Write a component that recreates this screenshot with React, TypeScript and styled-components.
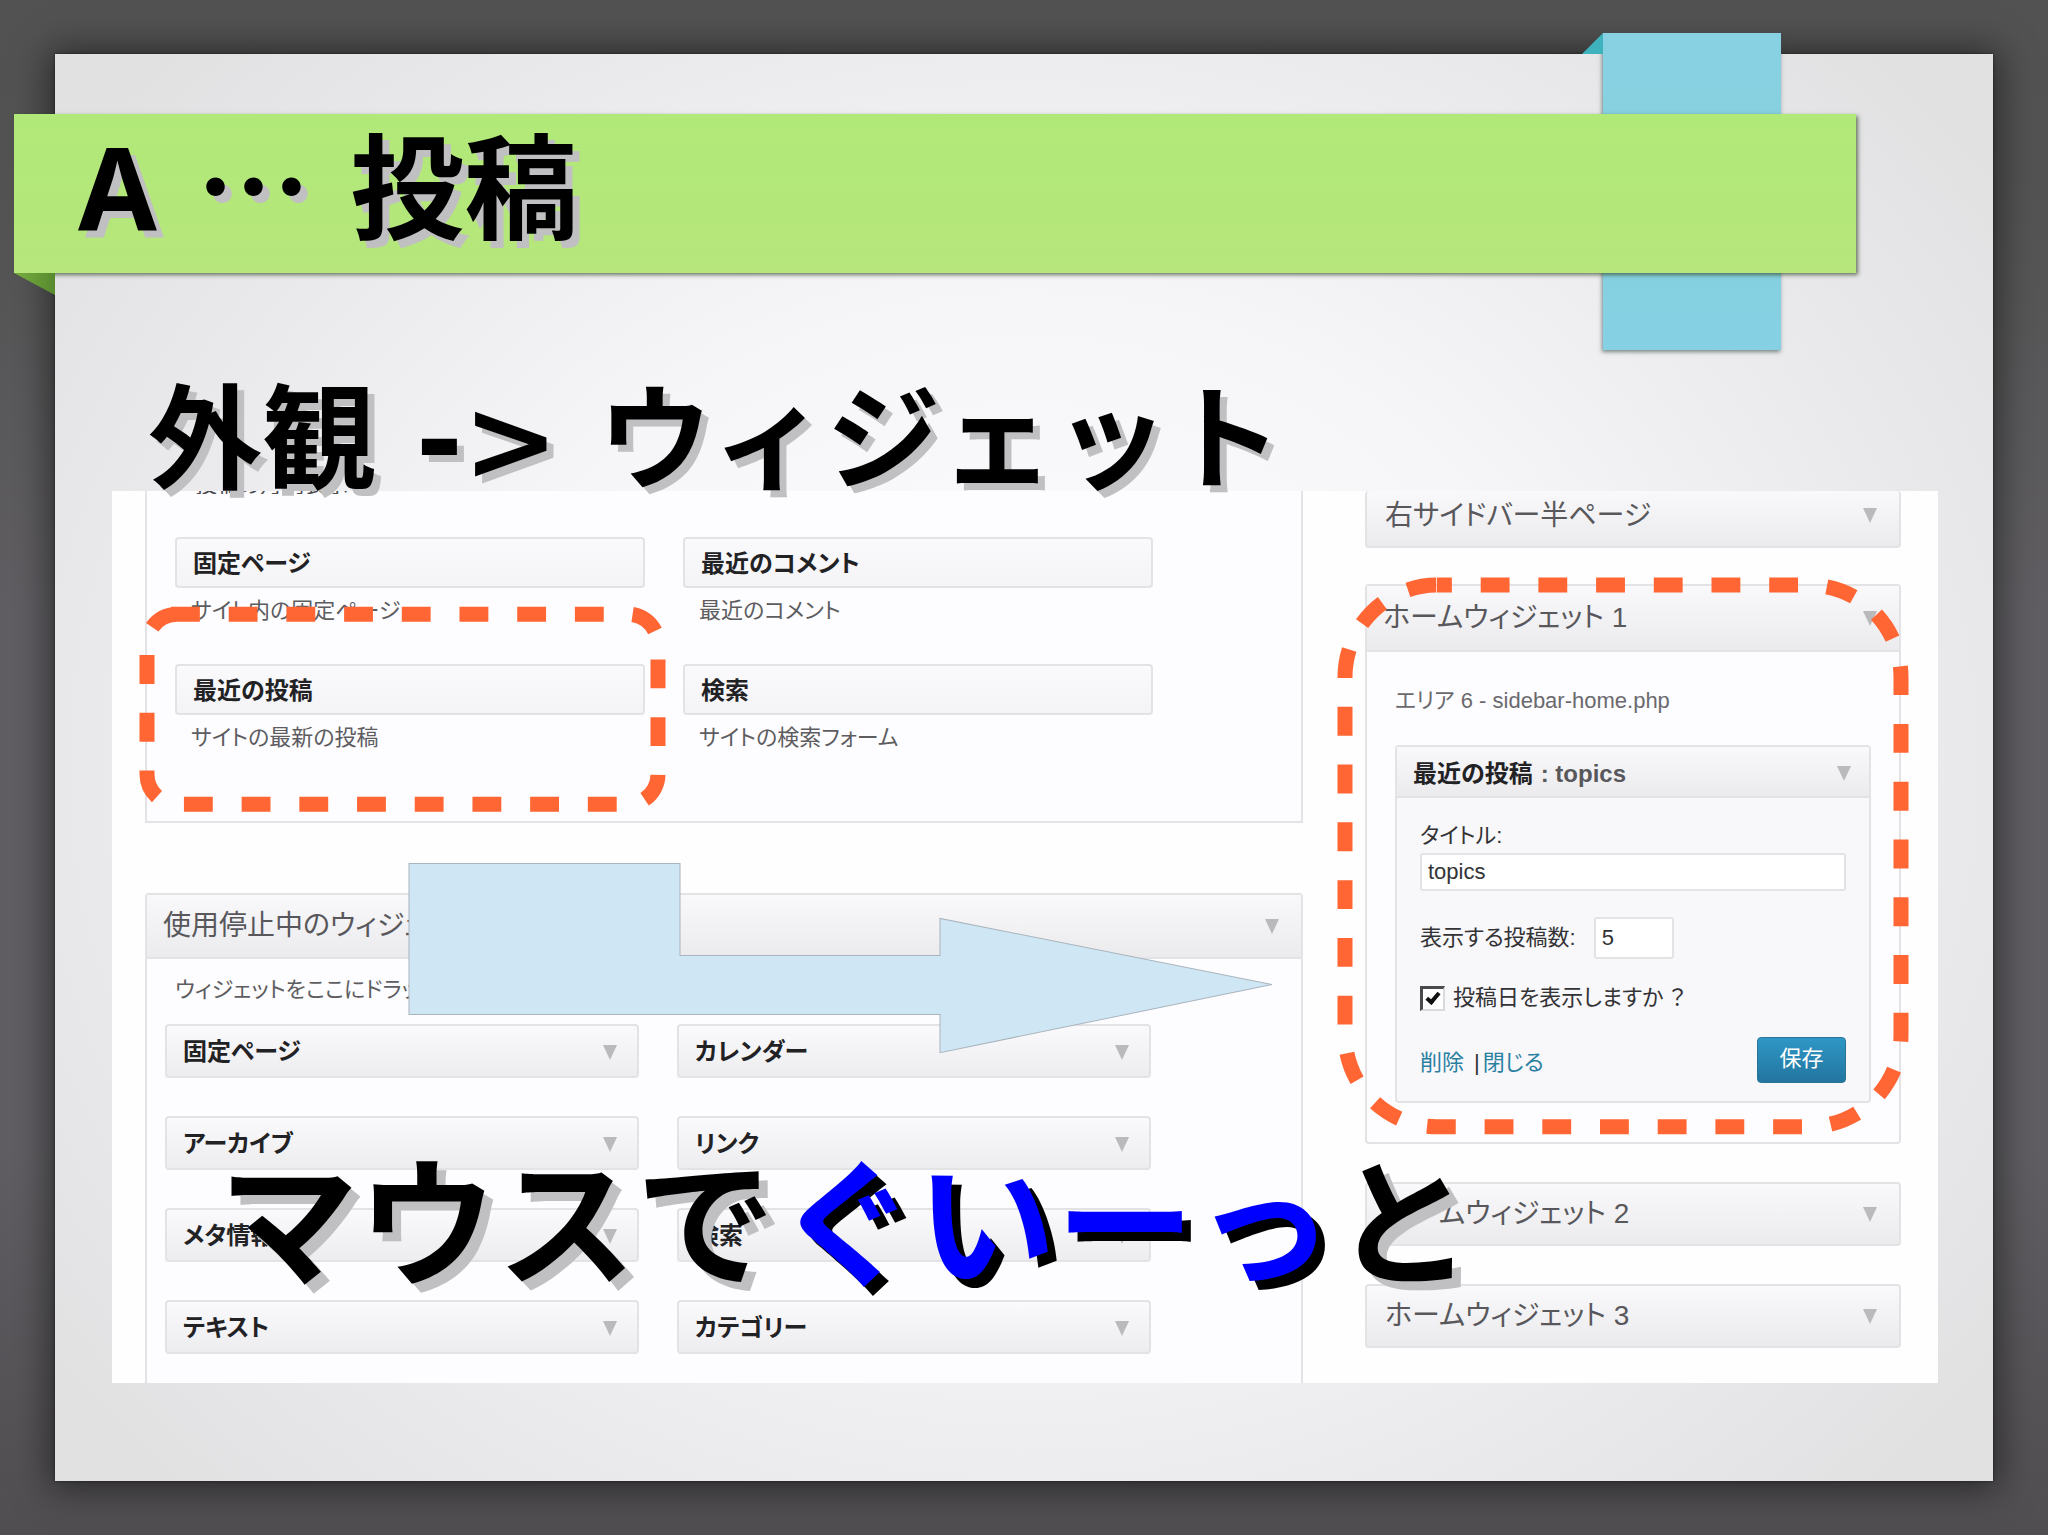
import React from "react";
import styled, { createGlobalStyle, css } from "styled-components";

const ORANGE = "#ff6633";
const LINE = "#e3e2e5";

const Global = createGlobalStyle`
  *, *::before, *::after { box-sizing: border-box; }
  html, body { margin: 0; padding: 0; }
  body {
    font-family: "Liberation Sans", "Noto Sans CJK JP", sans-serif;
    font-size: 22px;
    line-height: 24px;
    color: #4c4c50;
    background: #545355;
  }
  h1, h2, h3, p { margin: 0; font-weight: inherit; }
`;

const Slide = styled.div`
  display: flex;
  flex-direction: column;
  min-height: 100vh;
  padding: 54px 55px 54px;
  overflow: hidden;
  background: linear-gradient(180deg, #525252 0%, #535353 12%, #605e62 40%, #605e62 75%, #504e51 100%);
`;

const Sheet = styled.main`
  position: relative;
  flex: 1;
  padding: 60px 55px 98px 57px;
  background: radial-gradient(ellipse 62% 72% at 50% 50%, #fdfcff 0%, #f6f5f8 45%, #e9e8eb 78%, #e1e1e2 100%);
  box-shadow: 0 2px 34px 6px rgba(0, 0, 0, 0.5), 0 0 3px rgba(0, 0, 0, 0.5);
`;

const Tape = styled.div`
  position: absolute;
  top: -21px;
  right: 212px;
  width: 178px;
  height: 317px;
  background: linear-gradient(180deg, #88d1e3, #84d0dd 60%, #86d0e4);
  box-shadow: -1px 2px 4px rgba(60, 80, 80, 0.65);

  &::before {
    content: "";
    position: absolute;
    top: 0;
    left: -21px;
    width: 21px;
    height: 21px;
    background: #3fb3bd;
    clip-path: polygon(100% 0, 100% 100%, 0 100%);
  }
`;

const Banner = styled.header`
  position: relative;
  display: flex;
  align-items: center;
  height: 159px;
  margin: 0 82px 0 -98px;
  padding: 0 64px 26px;
  background: linear-gradient(180deg, #b1e978, #b6e67c);
  box-shadow: 2px 2px 4px rgba(50, 70, 40, 0.7);

  &::after {
    content: "";
    position: absolute;
    top: 100%;
    left: 0;
    width: 41px;
    height: 22px;
    background: linear-gradient(90deg, #76ad40, #588a2e);
    clip-path: polygon(0 0, 100% 0, 100% 100%);
  }
`;

const bigType = css`
  font-family: "Noto Sans CJK JP", sans-serif;
  font-weight: 700;
  color: #000;
  white-space: nowrap;
`;

const Title = styled.h1`
  ${bigType}
  font-size: 114px;
  line-height: 120px;
  text-shadow: 7px 7px 0 #c0bfc1;
`;

const Face = styled.span<{ $face: string }>`
  font-family: ${(p) => p.$face}, "Noto Sans CJK JP", sans-serif;
  line-height: 0;
  white-space: pre;
`;

const Subtitle = styled.h2`
  ${bigType}
  position: relative;
  z-index: 1;
  margin-top: 98px;
  padding-left: 36px;
  font-size: 114px;
  line-height: 120px;
  text-shadow: 7px 7px 0 #c0bfc1;
`;

const Stage = styled.section`
  position: relative;
`;

const Screen = styled.div`
  display: grid;
  grid-template-columns: 1158fr 536fr;
  column-gap: 62px;
  align-items: stretch;
  padding: 0 37px 0 33px;
  overflow: hidden;
  background: #fefefe;
  font-feature-settings: "palt";
`;

const Column = styled.div`
  display: flex;
  flex-direction: column;
  min-width: 0;
`;

const Available = styled.div`
  padding: 0 148px 71px 28px;
  border: 2px solid ${LINE};
  border-top: 0;
  background: #fdfcfe;
`;

const Clipped = styled.p`
  display: flex;
  align-items: flex-end;
  height: 3px;
  margin-bottom: 43px;
  padding-left: 20px;
  overflow: hidden;
  line-height: 18px;
`;

const Pairs = styled.div<{ $gap: number }>`
  display: grid;
  grid-template-columns: 1fr 1fr;
  column-gap: 38px;
  row-gap: ${(p) => p.$gap}px;
`;

const Bar = styled.h3<{ $tall?: boolean }>`
  display: flex;
  align-items: center;
  justify-content: space-between;
  height: ${(p) => (p.$tall ? 54 : 51)}px;
  padding: 2px 20px 0 16px;
  border: 2px solid ${LINE};
  border-radius: 4px;
  background: linear-gradient(180deg, #faf9fb, ${(p) => (p.$tall ? "#ededef" : "#f4f3f6")});
  font-size: 24px;
  font-weight: 700;
  color: #222225;
`;

const Note = styled.p`
  margin-top: 11px;
  padding-left: 16px;
  white-space: nowrap;
  color: #5d5d61;
`;

const Inactive = styled.div`
  flex: 1;
  margin-top: 70px;
  border: 2px solid ${LINE};
  border-bottom: 0;
  border-radius: 4px 4px 0 0;
  background: #fdfcfe;
`;

const InactiveBody = styled.div`
  padding: 19px 150px 29px 18px;
`;

const DropHint = styled.p`
  margin-bottom: 22px;
  padding-left: 10px;
  white-space: nowrap;
  color: #5d5d61;
`;

const AreaHead = styled.h3<{ $height: number; $framed?: boolean; $cut?: boolean }>`
  display: flex;
  align-items: center;
  justify-content: space-between;
  height: ${(p) => p.$height}px;
  padding: 0 22px ${(p) => (p.$cut ? 6 : 0)}px ${(p) => (p.$framed ? 16 : 18)}px;
  border: ${(p) => (p.$framed ? "0" : `2px solid ${LINE}`)};
  border-bottom: 2px solid ${LINE};
  ${(p) => p.$cut && "border-top: 0;"}
  border-radius: ${(p) => (p.$framed ? "0" : "4px")};
  background: linear-gradient(180deg, #f9f8fa, #ebeaec);
  font-size: 28px;
  line-height: 32px;
  white-space: nowrap;
  color: #58585c;
`;

const Arrow = styled.svg`
  flex: none;
  width: 14px;
  height: 15px;
  fill: #bab9bc;
`;

const Area = styled.div`
  margin-top: 36px;
  border: 2px solid ${LINE};
  border-radius: 4px;
  background: #fdfcfe;
`;

const AreaBody = styled.div`
  padding: 37px 28px 39px;
`;

const AreaNote = styled.p`
  margin-bottom: 32px;
  white-space: nowrap;
  color: #6a6a6e;
`;

const Widget = styled.form`
  border: 2px solid ${LINE};
  border-radius: 4px;
  background: #f8f7f9;
`;

const WidgetHead = styled.h3`
  display: flex;
  align-items: center;
  justify-content: space-between;
  height: 51px;
  padding: 4px 18px 0 16px;
  border-bottom: 2px solid ${LINE};
  background: linear-gradient(180deg, #f9f8fa, #ebeaec);
  font-size: 24px;
  font-weight: 700;
  color: #222225;
`;

const WidgetName = styled.span`
  margin-left: 8px;
  color: #58585c;
`;

const Fields = styled.div`
  display: flex;
  flex-direction: column;
  padding: 26px 23px 18px;
  color: #333336;
`;

const TextBox = styled.input<{ $width: string; $height: number }>`
  width: ${(p) => p.$width};
  height: ${(p) => p.$height}px;
  padding: 0 6px;
  border: 2px solid ${LINE};
  border-radius: 3px;
  background: #fff;
  font: inherit;
  color: #333336;
`;

const TitleLabel = styled.label`
  margin-bottom: 5px;
`;

const CountRow = styled.div`
  display: flex;
  align-items: center;
  gap: 18px;
  margin-top: 26px;
`;

const CheckRow = styled.label`
  display: flex;
  align-items: center;
  gap: 8px;
  height: 26px;
  margin-top: 26px;
`;

const Check = styled.input`
  position: relative;
  width: 25px;
  height: 25px;
  margin: 0;
  appearance: none;
  border: 2px solid #dad9dc;
  border-top: 3px solid #4a4a4c;
  border-left: 3px solid #4a4a4c;
  background: #fff;

  &:checked::after {
    content: "";
    position: absolute;
    top: 1px;
    left: 6px;
    width: 8px;
    height: 14px;
    border: solid #111;
    border-width: 0 4px 4px 0;
    transform: rotate(40deg);
  }
`;

const Actions = styled.div`
  display: flex;
  align-items: center;
  margin-top: 26px;
`;

const Action = styled.a`
  padding-top: 6px;
  text-decoration: none;
  color: #2a80a3;
`;

const Divider = styled.span`
  padding: 6px 3px 0 10px;
`;

const Save = styled.button`
  width: 89px;
  height: 46px;
  margin-left: auto;
  padding: 0 0 2px;
  border: 1px solid #2a7595;
  border-radius: 4px;
  background: linear-gradient(180deg, #2f97c6, #22759f);
  font: inherit;
  color: #fff;
`;

const Closed = styled.div`
  margin-top: 38px;
`;

const Marks = styled.svg`
  position: absolute;
  inset: 0;
  width: 100%;
  height: 100%;
  overflow: visible;
`;

const Slogan = styled.p`
  ${bigType}
  position: absolute;
  left: 107px;
  bottom: 88px;
  font-size: 139px;
  line-height: 160px;
  text-shadow: 9px 9px 0 #c0bfc1;
`;

const Stretch = styled.em`
  font-style: normal;
  color: #0000ff;
  text-shadow: 9px 9px 0 #000;
`;

const Down = () => (
  <Arrow viewBox="0 0 14 15" aria-hidden="true">
    <path d="M0 0H14L7 15Z" />
  </Arrow>
);

const available = [
  ["固定ページ", "サイト内の固定ページ"],
  ["最近のコメント", "最近のコメント"],
  ["最近の投稿", "サイトの最新の投稿"],
  ["検索", "サイトの検索フォーム"],
];

const inactive = ["固定ページ", "カレンダー", "アーカイブ", "リンク", "メタ情報", "検索", "テキスト", "カテゴリー"];

export default function App() {
  return (
    <>
      <Global />
      <Slide>
        <Sheet>
          <Tape />
          <Banner>
            <Title>
              <Face $face='"Noto Sans"'>A</Face>
              <Face $face='"DejaVu Sans"'> </Face>
              <Face $face='"Noto Sans CJK TC"' lang="zh-Hant">…</Face>
              <Face $face='"DejaVu Sans"'> </Face>投稿
            </Title>
          </Banner>
          <Subtitle>
            外観<Face $face='"DejaVu Sans"'>{" -> "}</Face>ウィジェット
          </Subtitle>
          <Stage>
            <Screen>
              <Column>
                <Available>
                  <Clipped>投稿の月別表示</Clipped>
                  <Pairs $gap={41}>
                    {available.map(([name, note]) => (
                      <div key={name}>
                        <Bar>{name}</Bar>
                        <Note>{note}</Note>
                      </div>
                    ))}
                  </Pairs>
                </Available>
                <Inactive>
                  <AreaHead $height={64} $framed>
                    使用停止中のウィジェット
                    <Down />
                  </AreaHead>
                  <InactiveBody>
                    <DropHint>ウィジェットをここにドラッグすると設定を保持したまま削除できます。</DropHint>
                    <Pairs $gap={38}>
                      {inactive.map((name) => (
                        <Bar key={name} $tall>
                          {name}
                          <Down />
                        </Bar>
                      ))}
                    </Pairs>
                  </InactiveBody>
                </Inactive>
              </Column>
              <Column>
                <AreaHead $height={57} $cut>
                  右サイドバー半ページ
                  <Down />
                </AreaHead>
                <Area>
                  <AreaHead $height={66} $framed>
                    ホームウィジェット 1
                    <Down />
                  </AreaHead>
                  <AreaBody>
                    <AreaNote>エリア 6 - sidebar-home.php</AreaNote>
                    <Widget onSubmit={(e) => e.preventDefault()}>
                      <WidgetHead>
                        <span>
                          最近の投稿<WidgetName>: topics</WidgetName>
                        </span>
                        <Down />
                      </WidgetHead>
                      <Fields>
                        <TitleLabel htmlFor="title">タイトル:</TitleLabel>
                        <TextBox id="title" $width="100%" $height={38} defaultValue="topics" />
                        <CountRow>
                          <label htmlFor="count">表示する投稿数:</label>
                          <TextBox id="count" $width="80px" $height={42} defaultValue="5" />
                        </CountRow>
                        <CheckRow>
                          <Check type="checkbox" defaultChecked />
                          投稿日を表示しますか ？
                        </CheckRow>
                        <Actions>
                          <Action href="#delete">削除</Action>
                          <Divider>|</Divider>
                          <Action href="#close">閉じる</Action>
                          <Save type="submit">保存</Save>
                        </Actions>
                      </Fields>
                    </Widget>
                  </AreaBody>
                </Area>
                <Closed>
                  <AreaHead $height={64}>
                    ホームウィジェット 2
                    <Down />
                  </AreaHead>
                </Closed>
                <Closed>
                  <AreaHead $height={64}>
                    ホームウィジェット 3
                    <Down />
                  </AreaHead>
                </Closed>
              </Column>
            </Screen>
            <Marks viewBox="0 0 1826 891" preserveAspectRatio="none" aria-hidden="true">
              <path
                d="M297 372H568V464H828V427L1160 493L828 561V523H297Z"
                fill="#cfe7f5"
                stroke="#a9b4bd"
              />
              <g fill="none" stroke={ORANGE} strokeWidth="15" strokeDasharray="28.85">
                <path d="M59 123H516A30 30 0 0 1 546 153V283A30 30 0 0 1 516 313H65A30 30 0 0 1 35 283V153A30 30 0 0 1 65 123" />
                <path
                  strokeDashoffset="14"
                  d="M1325 94H1697A92 92 0 0 1 1789 186V543A92 92 0 0 1 1697 635H1325A92 92 0 0 1 1233 543V186A92 92 0 0 1 1325 94"
                />
              </g>
            </Marks>
            <Slogan>
              マウスで<Stretch>ぐいーっ</Stretch>と
            </Slogan>
          </Stage>
        </Sheet>
      </Slide>
    </>
  );
}
